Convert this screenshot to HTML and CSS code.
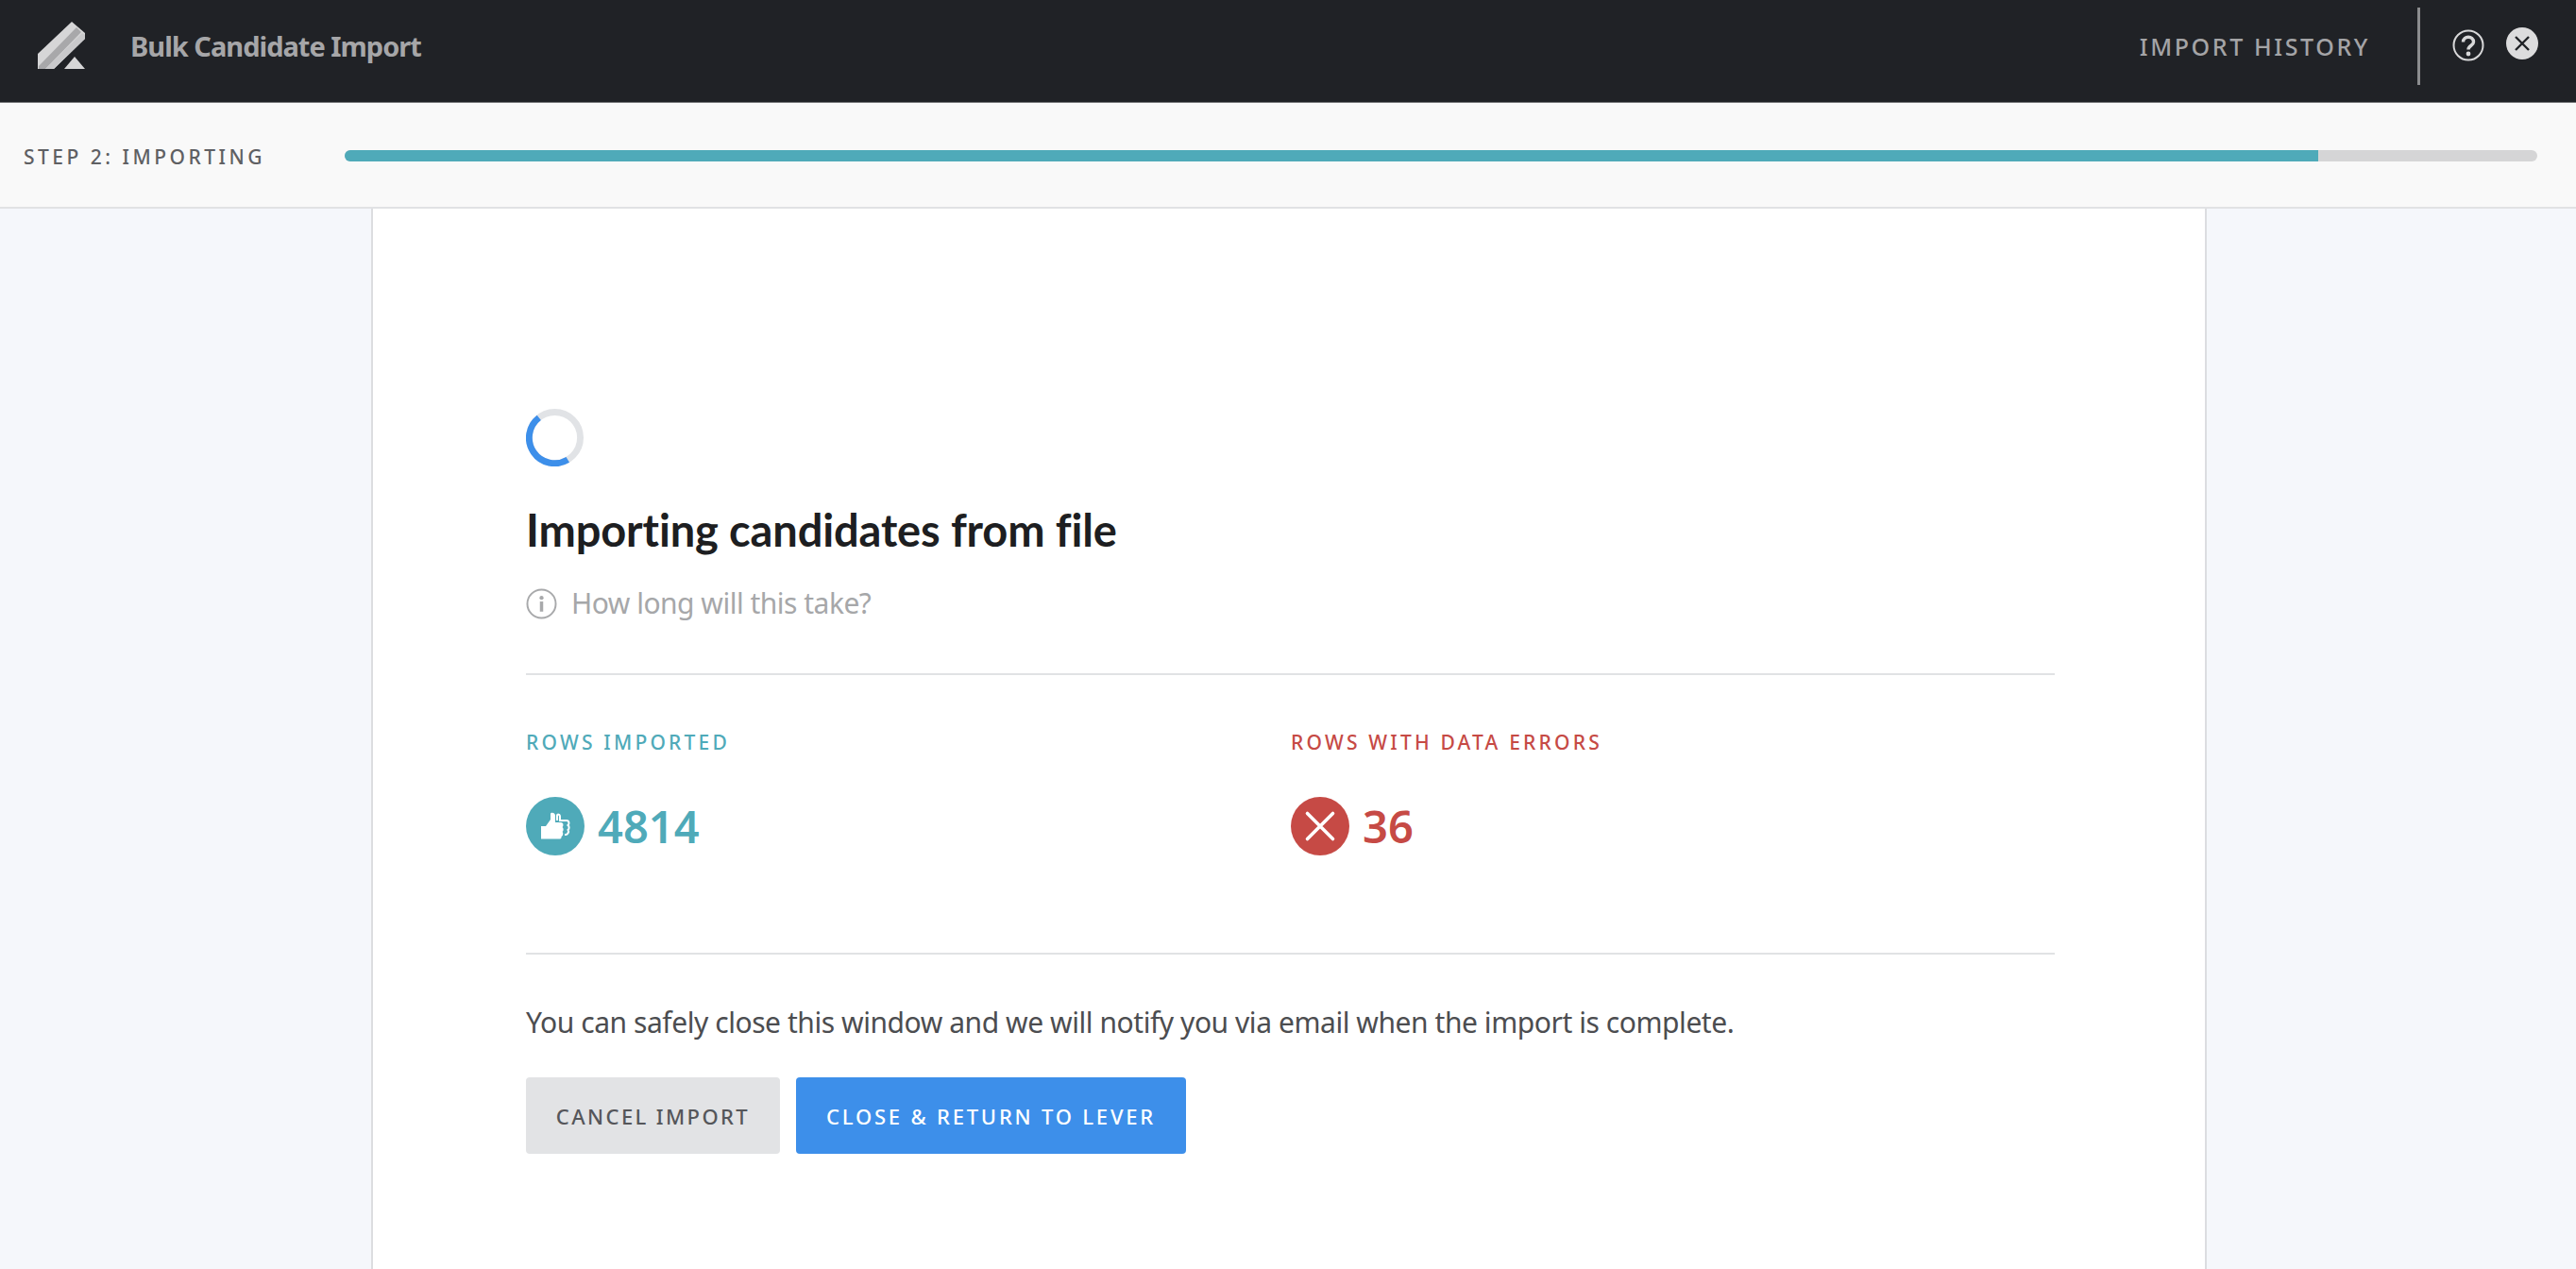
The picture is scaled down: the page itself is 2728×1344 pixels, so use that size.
FILE: index.html
```html
<!DOCTYPE html>
<html lang="en">
<head>
<meta charset="utf-8">
<title>Bulk Candidate Import</title>
<link rel="stylesheet" href="styles.css">
</head>
<body>
<header class="topbar">
  <div class="brand">
    <svg class="logo" viewBox="0 0 51 50" width="51" height="50">
      <path d="M0 34 L36 0 L50 12 L50 18 L17 50 L0 50 Z" fill="#d6d6d7"/>
      <path d="M1 47 L41 6 L46 11 L8 50 L1 50 Z" fill="#a8a8aa"/>
      <path d="M8 50 L47 12 L50 14 L50 18 L17 50 Z" fill="#c9c9cb"/>
      <path d="M28 50 L39 37 L50 50 Z" fill="#d6d6d7"/>
    </svg>
    <span class="brand-name">Bulk Candidate Import</span>
  </div>
  <div class="top-actions">
    <span class="history">IMPORT HISTORY</span>
    <span class="top-sep"></span>
    <svg class="top-icon help" viewBox="0 0 34 34" width="34" height="34">
      <circle cx="17" cy="17" r="15.5" fill="none" stroke="#d8d8d9" stroke-width="2"/>
      <path d="M11.500 13.500 C11.500 6.500 22.500 6.500 22.500 13.500 C22.500 17.500 17 17 17 21.500" fill="none" stroke="#d8d8d9" stroke-width="3.400"/>
      <circle cx="17" cy="26" r="2.400" fill="#d8d8d9"/>
    </svg>
    <svg class="top-icon close" viewBox="0 0 34 34" width="34" height="34">
      <circle cx="17" cy="17" r="17" fill="#dcdcdd"/>
      <path d="M10 10 L24 24 M24 10 L10 24" stroke="#202226" stroke-width="2.400" fill="none"/>
    </svg>
  </div>
</header>
<section class="stepbar">
  <span class="step-label">STEP 2: IMPORTING</span>
  <div class="track"><div class="fill" style="width:90%"></div></div>
</section>
<main class="page">
  <div class="card">
    <svg class="spinner" viewBox="0 0 62 62" width="61" height="61">
      <circle cx="31" cy="31" r="27.500" fill="none" stroke="#e1e3e6" stroke-width="7"/>
      <path d="M14 9.500 A27.500 27.500 0 0 0 45 54.800" fill="none" stroke="#3d8fea" stroke-width="7"/>
    </svg>
    <h1 class="title">Importing candidates from file</h1>
    <div class="hint">
      <svg viewBox="0 0 34 34" width="33" height="33">
        <circle cx="17" cy="17" r="15.500" fill="none" stroke="#a8a9ab" stroke-width="2"/>
        <circle cx="17" cy="10.500" r="2.200" fill="#a8a9ab"/>
        <rect x="15.200" y="14.500" width="3.600" height="11" fill="#a8a9ab"/>
      </svg>
      <span>How long will this take?</span>
    </div>
    <div class="stats">
      <div class="stat ok">
        <div class="stat-label">ROWS IMPORTED</div>
        <div class="stat-value">
          <svg viewBox="0 0 62 62" width="62" height="62">
            <circle cx="31" cy="31" r="31" fill="#4faab9"/>
            <path d="M16 31 H21 L26 24 V18 C26 16 31 16 31 20 V27 H37 C40 27 40 31 38.500 32 C40 33 40 36 38.500 37 C40 38 39 42 37.500 42 C38 43 37 44.500 36 44.500 H16 Z" fill="#fff"/>
            <path d="M33 25 V20 C33 18 36 18 36 21 V25 H43 C46 25 46 29 44.500 30 C46 31 46 34 44.500 35 C46 37 44 40 42 40 H41" fill="none" stroke="#fff" stroke-width="2"/>
          </svg>
          <span>4814</span>
        </div>
      </div>
      <div class="stat err">
        <div class="stat-label">ROWS WITH DATA ERRORS</div>
        <div class="stat-value">
          <svg viewBox="0 0 62 62" width="62" height="62">
            <circle cx="31" cy="31" r="31" fill="#c64a45"/>
            <path d="M17.500 17.500 L44.500 44.500 M44.500 17.500 L17.500 44.500" stroke="#fff" stroke-width="3.600" stroke-linecap="round" fill="none"/>
          </svg>
          <span>36</span>
        </div>
      </div>
    </div>
    <p class="note">You can safely close this window and we will notify you via email when the import is complete.</p>
    <div class="buttons">
      <button class="btn btn-grey">CANCEL IMPORT</button>
      <button class="btn btn-blue">CLOSE &amp; RETURN TO LEVER</button>
    </div>
  </div>
</main>
</body>
</html>
```

FILE: styles.css
```css
* { box-sizing: border-box; }
html, body { margin: 0; height: 100%; }
body {
  font-family: "Noto Sans", "Open Sans", sans-serif;
  background: #f5f7fb;
  display: flex;
  flex-direction: column;
  height: 1344px;
  overflow: hidden;
}
.topbar {
  height: 109px;
  flex: none;
  background: #202226;
  border-bottom: 1px solid #77787a;
  display: flex;
  align-items: center;
  justify-content: space-between;
  padding: 0 40px 0 40px;
}
.brand { display: flex; align-items: center; gap: 47px; margin-top: -12px; }
.logo { display: block; }
.brand-name { font-size: 29px; font-weight: 700; color: #a6a6a8; letter-spacing: -1px; }
.top-actions { display: flex; align-items: center; }
.history { font-size: 25px; color: #a4a4a6; letter-spacing: 2.600px; font-weight: 500; margin-top: -10px; }
.top-sep { width: 3px; height: 82px; background: #8b8c8e; margin: -11px 34px 0 50px; }
.top-icon { display: block; }
.help { margin-top: -12px; }
.close { margin: -16px 0 0 23px; }
.stepbar {
  height: 112px;
  flex: none;
  background: #f9f9f9;
  border-bottom: 2px solid #e1e2e4;
  display: flex;
  align-items: center;
  padding: 1px 41px 0 25px;
}
.step-label { width: 340px; flex: none; font-size: 21px; color: #5f6063; letter-spacing: 3.500px; font-weight: 500; margin-top: 2px; }
.track { flex: 1; height: 12px; border-radius: 6px; background: #d5d5d6; overflow: hidden; }
.fill { height: 100%; background: #4faab9; }
.page { flex: 1; display: flex; justify-content: center; padding-left: 2px; }
.card {
  width: 1944px;
  background: #fff;
  border-left: 2px solid #dcdde0;
  border-right: 2px solid #dcdde0;
  padding: 212px 159px 0 162px;
}
.spinner { display: block; }
.title { margin: 37px 0 0; font-family: "Lato", "Noto Sans", sans-serif; font-size: 47px; line-height: 60px; font-weight: 700; color: #1d1e21; letter-spacing: -0.130px; }
.hint { display: flex; align-items: center; gap: 15px; margin-top: 26px; font-size: 30px; line-height: 44px; color: #a6a7a9; letter-spacing: -0.5px; }
.hint svg { display: block; }
.stats { display: flex; margin-top: 52px; border-top: 2px solid #e1e2e4; border-bottom: 2px solid #e1e2e4; height: 298px; padding-top: 56px; }
.stat { width: 810px; flex: none; }
.stat-label { font-size: 21px; line-height: 30px; letter-spacing: 3.200px; font-weight: 500; }
.stat-value { display: flex; align-items: center; gap: 14px; margin-top: 43px; font-size: 47px; line-height: 62px; font-weight: 600; }
.stat-value svg { display: block; }
.ok { color: #4faab9; }
.err { color: #c64a45; }
.note { margin: 50px 0 0; font-size: 30px; line-height: 44px; color: #4c4d50; letter-spacing: -0.440px; }
.buttons { display: flex; gap: 17px; margin-top: 36px; }
.btn { height: 81px; border: 0; border-radius: 4px; font-family: inherit; font-size: 22px; letter-spacing: 2.400px; font-weight: 500; padding: 0; }
.btn-grey { width: 269px; background: #e2e3e5; color: #55565a; }
.btn-blue { width: 413px; background: #3d8fea; color: #fff; letter-spacing: 2.800px; }
```
